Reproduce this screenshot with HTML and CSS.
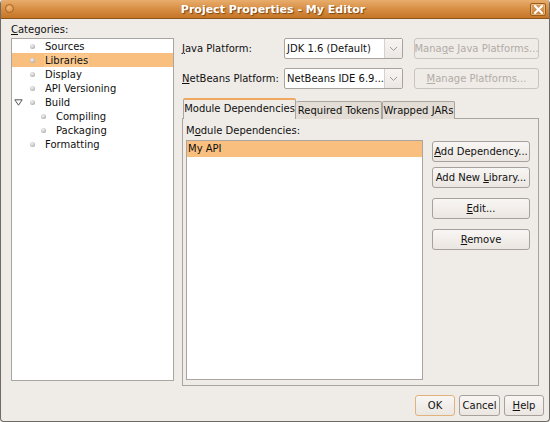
FILE: index.html
```html
<!DOCTYPE html>
<html>
<head>
<meta charset="utf-8">
<link rel="stylesheet" href="styles.css">
</head>
<body>
<div class="window">
  <div class="titlebar">
    <span class="menu-dot"></span>
    <span class="title">Project Properties - My Editor</span>
    <span class="close">
      <svg width="9" height="9" viewBox="0 0 9 9"><path d="M1 1 L8 8 M8 1 L1 8" stroke="#fff" stroke-width="2" stroke-linecap="square"/></svg>
    </span>
  </div>
  <div class="main">
    <div class="left">
      <div class="cat-label"><u>C</u>ategories:</div>
      <div class="tree">
        <div class="row"><span class="bullet"></span><span class="txt">Sources</span></div>
        <div class="row selected"><span class="bullet"></span><span class="txt sel-txt">Libraries</span></div>
        <div class="row"><span class="bullet"></span><span class="txt">Display</span></div>
        <div class="row"><span class="bullet"></span><span class="txt">API Versioning</span></div>
        <div class="row"><span class="expander"><svg width="9" height="7" viewBox="0 0 9 7"><path d="M0.8 0.8 H8.2 L4.5 6.2 Z" fill="none" stroke="#555" stroke-width="1"/></svg></span><span class="bullet"></span><span class="txt">Build</span></div>
        <div class="row child"><span class="bullet"></span><span class="txt">Compiling</span></div>
        <div class="row child"><span class="bullet"></span><span class="txt">Packaging</span></div>
        <div class="row"><span class="bullet"></span><span class="txt">Formatting</span></div>
      </div>
    </div>
    <div class="right">
      <div class="form-row">
        <div class="flabel"><u>J</u>ava Platform:</div>
        <div class="combo"><div class="combo-text">JDK 1.6 (Default)</div><div class="combo-btn"><svg width="9" height="6" viewBox="0 0 9 6"><path d="M1 1 L4.5 4.5 L8 1" fill="none" stroke="#a09a94" stroke-width="1"/></svg></div></div>
        <div class="btn disabled wide"><span>Mana<u>g</u>e Java Platforms...</span></div>
      </div>
      <div class="form-row">
        <div class="flabel"><u>N</u>etBeans Platform:</div>
        <div class="combo"><div class="combo-text">NetBeans IDE 6.9...</div><div class="combo-btn"><svg width="9" height="6" viewBox="0 0 9 6"><path d="M1 1 L4.5 4.5 L8 1" fill="none" stroke="#a09a94" stroke-width="1"/></svg></div></div>
        <div class="btn disabled wide"><span><u>M</u>anage Platforms...</span></div>
      </div>
      <div class="tabs">
        <div class="tab active">Module Dependencies</div>
        <div class="tab t2">Required Tokens</div>
        <div class="tab t3">Wrapped JARs</div>
      </div>
      <div class="panel">
        <div class="panel-left">
          <div class="plabel">M<u>o</u>dule Dependencies:</div>
          <div class="list">
            <div class="list-row selected">My API</div>
          </div>
        </div>
        <div class="side-buttons">
          <div class="btn side b1"><span><u>A</u>dd Dependency...</span></div>
          <div class="btn side b2"><span>Add New <u>L</u>ibrary...</span></div>
          <div class="btn side b3"><span><u>E</u>dit...</span></div>
          <div class="btn side b4"><span><u>R</u>emove</span></div>
        </div>
      </div>
    </div>
  </div>
  <div class="bottom">
    <div class="btn ok"><span>OK</span></div>
    <div class="btn cancel"><span>Cancel</span></div>
    <div class="btn help"><span><u>H</u>elp</span></div>
  </div>
</div>
</body>
</html>
```
FILE: styles.css
```css
* { box-sizing: border-box; }
html, body { margin: 0; padding: 0; background: #efebe7; }
body {
  font-family: "DejaVu Sans", "Liberation Sans", sans-serif;
  font-size: 10px;
  color: #101010;
}
u { text-decoration: underline; text-underline-offset: 1px; }

.window {
  width: 550px;
  height: 422px;
  background: #efebe7;
  border-left: 1px solid #6e6a66;
  border-right: 1px solid #6e6a66;
  border-bottom: 1px solid #6e6a66;
  border-radius: 4px 4px 4px 4px;
  overflow: hidden;
  display: flex;
  flex-direction: column;
}

.titlebar {
  height: 19px;
  flex: none;
  background: linear-gradient(#e8ad6c, #d58b40 55%, #c57628);
  border-bottom: 1px solid #8c5418;
  display: flex;
  align-items: center;
  position: relative;
  margin: 0 -1px;
}
.menu-dot {
  position: absolute;
  left: 5px;
  top: 4px;
  width: 9px;
  height: 9px;
  border-radius: 50%;
  border: 1px solid #a8641e;
  background: radial-gradient(circle at 40% 35%, #f0b878, #d08a40);
}
.title {
  flex: 1;
  text-align: center;
  color: #ffffff;
  font-weight: bold;
  font-size: 11px;
  text-shadow: 1px 1px 1px #7a4510;
  padding-right: 4px;
}
.close {
  position: absolute;
  right: 4px;
  top: 3px;
  width: 16px;
  height: 13px;
  border: 1px solid #9b5c1f;
  border-radius: 2px;
  background: linear-gradient(#dca062, #c8843c);
  box-shadow: inset 0 0 0 1px rgba(255,220,170,0.5);
  display: flex;
  align-items: center;
  justify-content: center;
}
.close svg { display: block; }

.main {
  display: flex;
  padding: 3px 0 0 10px;
  height: 367px;
  flex: none;
}

.left { width: 163px; flex: none; }
.cat-label { height: 14px; line-height: 14px; padding-top: 1px; margin-bottom: 2px; }
.tree {
  height: 343px;
  background: #ffffff;
  border: 1px solid #a9a5a1;
}
.row {
  height: 14px;
  line-height: 14px;
  position: relative;
  white-space: nowrap;
}
.row.selected { background: #f8bf7e; }
.bullet {
  position: absolute;
  left: 18px;
  top: 5px;
  width: 5px;
  height: 5px;
  border-radius: 50%;
  background: radial-gradient(circle at 40% 35%, #f4f4f4 0%, #c4c4c4 55%, #8f8f8f 100%);
}
.txt { position: absolute; left: 32px; top: 1px; padding: 0 1px; height: 13px; line-height: 14px; }
.sel-txt { background: #fbc88d; }
.child .bullet { left: 29px; }
.child .txt { left: 43px; }
.expander { position: absolute; left: 2px; top: 4px; width: 9px; height: 7px; }
.expander svg { display: block; }

.right { margin-left: 8px; padding-top: 16px; width: 366px; }

.form-row {
  display: flex;
  align-items: center;
  height: 21px;
  margin-bottom: 9px;
}
.flabel { width: 102px; flex: none; }
.combo {
  width: 119px;
  height: 21px;
  flex: none;
  display: flex;
  border: 1px solid #a8a39e;
  border-radius: 2px;
  background: #fff;
}
.combo-text { flex: 1; padding-left: 2px; line-height: 19px; white-space: nowrap; overflow: hidden; }
.combo-btn {
  width: 18px;
  flex: none;
  border-left: 1px solid #d6d1cc;
  background: linear-gradient(#f7f5f3, #ebe7e3);
  display: flex;
  align-items: center;
  justify-content: center;
}
.combo-btn svg { display: block; }

.btn {
  height: 21px;
  border: 1px solid #a7a19b;
  border-radius: 3px;
  background: linear-gradient(#f8f6f4, #ebe6e1);
  display: flex;
  align-items: center;
  justify-content: center;
  white-space: nowrap;
  color: #111;
}
.btn.disabled {
  color: #b2aca6;
  border-color: #c9c4bf;
  background: #efebe7;
}
.wide { width: 125px; margin-left: 11px; flex: none; }

.tabs {
  display: flex;
  align-items: flex-end;
  height: 21px;
  margin-top: 0px;
  padding-left: 1px;
  position: relative;
  z-index: 1;
  margin-bottom: -1px;
}
.tab {
  height: 18px;
  line-height: 17px;
  text-align: center;
  background: #e3ddd6;
  border: 1px solid #aaa49e;
  border-bottom: none;
  border-radius: 2px 2px 0 0;
  white-space: nowrap;
}
.tab.active {
  height: 21px;
  width: 113px;
  background: #efebe7;
  border-top: 2px solid #f0a85e;
  line-height: 18px;
  padding-bottom: 1px;
}
.t2 { width: 86px; border-left: none; }
.t3 { width: 73px; border-left: 1px solid #aaa49e; }

.panel {
  width: 357px;
  height: 268px;
  border: 1px solid #aaa49e;
  display: flex;
  padding: 5px 0 0 3px;
}
.panel-left { width: 237px; flex: none; }
.plabel { height: 14px; line-height: 14px; margin-bottom: 2px; }
.list {
  height: 240px;
  background: #fff;
  border: 1px solid #aaa49e;
}
.list-row { height: 16px; line-height: 16px; padding-left: 1px; }
.list-row.selected { background: #f8bf7e; }

.side-buttons { margin-left: 9px; padding-top: 17px; width: 98px; }
.side { width: 98px; }
.b2 { margin-top: 5px; }
.b3 { margin-top: 10px; }
.b4 { margin-top: 10px; }

.bottom {
  display: flex;
  justify-content: flex-end;
  padding: 9px 5px 0 0;
  gap: 4px;
}
.ok { width: 40px; border-color: #e2b27c; }
.cancel { width: 41px; }
.help { width: 40px; }
```
